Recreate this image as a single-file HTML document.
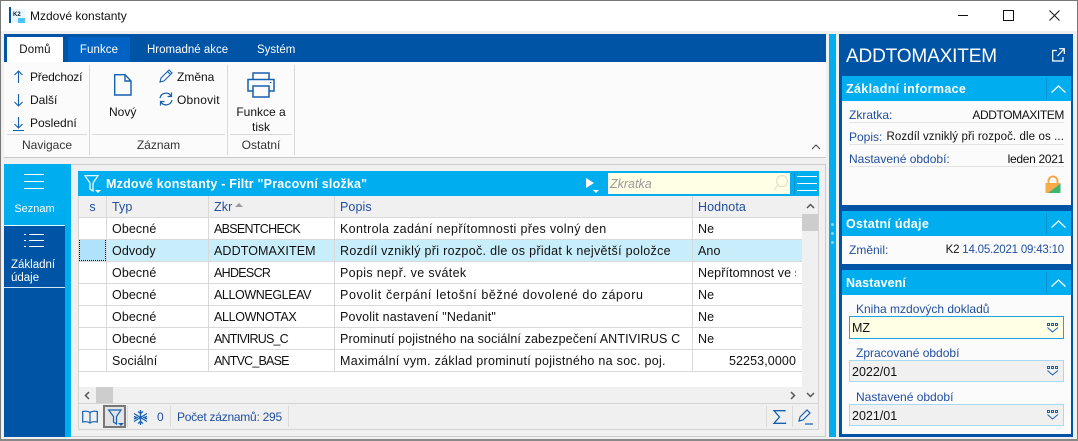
<!DOCTYPE html>
<html lang="cs"><head><meta charset="utf-8"><title>Mzdové konstanty</title>
<style>
html,body{margin:0;padding:0}
body{width:1078px;height:441px;overflow:hidden;position:relative;background:#f0f0f0;font-family:"Liberation Sans",sans-serif;font-size:12.5px;color:#111;letter-spacing:.1px}
.b{position:absolute}
.t{position:absolute;white-space:nowrap;line-height:16px}
.r{text-align:right}
.c{text-align:center}
.lb{color:#1f4e9e}
svg{position:absolute;overflow:visible}
.w{color:#fff}
.h{font-weight:bold;color:#fff;font-size:12.5px}
.n{font-size:12px;letter-spacing:0}
.hl{position:absolute;background:#d9d9d9;height:1px}
.vl{position:absolute;background:#d9d9d9;width:1px}
</style></head><body>
<!-- window frame -->
<div class="b" style="left:0;top:31px;width:1078px;height:410px;background:#f0f0f0"></div>
<div class="b" style="left:0;top:0;width:1078px;height:31px;background:#fff"></div>
<div class="b" style="left:0;top:0;width:1078px;height:1px;background:#777"></div>
<div class="b" style="left:0;top:0;width:1px;height:441px;background:#777"></div>
<div class="b" style="left:1077px;top:0;width:1px;height:441px;background:#777"></div>
<div class="b" style="left:0;top:439px;width:1078px;height:2px;background:#888"></div>
<!-- title -->
<div class="b" style="left:9px;top:7px;width:2px;height:16px;background:#0054a6"></div>
<div class="b" style="left:12px;top:9px;width:13px;height:13px;background:#e9f6fd"></div>
<div class="b" style="left:18px;top:18px;width:7px;height:5px;background:#4cc3f0"></div>
<div class="t" style="left:13px;top:10px;font:bold 6px/10px 'Liberation Sans';color:#123;letter-spacing:0">K2</div>
<div class="t n" style="left:30px;top:8px">Mzdové konstanty</div>
<div class="b" style="left:958px;top:15px;width:10px;height:1px;background:#111"></div>
<div class="b" style="left:1003px;top:10px;width:9px;height:9px;border:1px solid #111"></div>
<svg style="left:1049px;top:10px" width="11" height="11"><path d="M.5.5l10 10M10.500.5l-10 10" stroke="#111" fill="none"/></svg>
<!-- ribbon -->
<div class="b" style="left:4px;top:34px;width:822px;height:28px;background:#0054a6"></div>
<div class="b" style="left:7px;top:37px;width:56px;height:25px;background:#fff"></div>
<div class="b" style="left:68px;top:37px;width:62px;height:25px;background:#0063c4"></div>
<div class="t" style="left:7px;top:42px;width:56px;text-align:center;font-size:11.5px;letter-spacing:.2px">Domů</div>
<div class="t w" style="left:68px;top:42px;width:62px;text-align:center;font-size:11.5px;letter-spacing:.1px">Funkce</div>
<div class="t w" style="left:147px;top:42px;font-size:11.5px;letter-spacing:0">Hromadné akce</div>
<div class="t w" style="left:257px;top:42px;font-size:11.5px;letter-spacing:0">Systém</div>
<div class="b" style="left:4px;top:62px;width:822px;height:95px;background:#fbfbfb;border-bottom:1px solid #c8c8c8"></div>
<div class="vl" style="left:89px;top:65px;height:90px"></div>
<div class="vl" style="left:227px;top:65px;height:90px"></div>
<div class="vl" style="left:294px;top:65px;height:90px"></div>
<div class="hl" style="left:7px;top:134px;width:80px"></div>
<div class="hl" style="left:92px;top:134px;width:133px"></div>
<div class="hl" style="left:230px;top:134px;width:62px"></div>
<svg style="left:13px;top:70px" width="12" height="60" fill="none" stroke="#1660b0" stroke-width="1.1"><path d="M5.500 13V1M1.500 5l4-4 4 4M5.500 24v12M1.500 32l4 4 4-4M5.500 47v11M1.500 54l4 4 4-4M0 60.500h11"/></svg>
<div class="t n" style="left:30px;top:69px;letter-spacing:-.2px">Předchozí</div>
<div class="t n" style="left:30px;top:92px">Další</div>
<div class="t n" style="left:30px;top:115px">Poslední</div>
<div class="t n" style="left:7px;top:137px;width:80px;text-align:center;color:#333">Navigace</div>
<svg style="left:114px;top:74px" width="18" height="22" fill="none" stroke="#1660b0" stroke-width="1.4"><path d="M.7.700H11L17 7V21H.7ZM11 .700V7H17"/></svg>
<div class="t n" style="left:109px;top:104px">Nový</div>
<svg style="left:159px;top:69px" width="14" height="14" fill="none" stroke="#1660b0" stroke-width="1.1"><path d="M1 13l1-4 8-8 3 3-8 8ZM8.500 2.500l3 3"/></svg>
<svg style="left:159px;top:92px" width="14" height="14" fill="none" stroke="#1660b0" stroke-width="1.200"><path d="M1 6A6 6 0 0 1 12 4M13 8A6 6 0 0 1 2 10M12.500 0.500V4.500H8.500M1.500 13.500V9.500H5.500"/></svg>
<div class="t n" style="left:177px;top:69px">Změna</div>
<div class="t n" style="left:177px;top:92px;letter-spacing:.2px">Obnovit</div>
<div class="t n" style="left:92px;top:137px;width:133px;text-align:center;color:#333">Záznam</div>
<svg style="left:247px;top:72px" width="28" height="26" fill="none" stroke="#1660b0" stroke-width="1.500"><path d="M6 7V1H22V7M6 19H1V7.500H27V19H22M6 14H22V25H6Z"/><path d="M23 10.500h1.500" stroke-width="1"/></svg>
<div class="t c n" style="left:230px;top:104px;width:62px">Funkce a</div>
<div class="t c n" style="left:230px;top:119px;width:62px">tisk</div>
<div class="t n" style="left:230px;top:137px;width:62px;text-align:center;color:#333">Ostatní</div>
<svg style="left:811px;top:144px" width="10" height="6" fill="none" stroke="#444" stroke-width="1"><path d="M1 5l4-4 4 4"/></svg>
<!-- left nav -->
<div class="b" style="left:4px;top:164px;width:61px;height:273px;background:#0054a6"></div>
<div class="b" style="left:4px;top:164px;width:61px;height:61px;background:#00aeef"></div>
<div class="b" style="left:65px;top:164px;width:6px;height:273px;background:#00aeef"></div>
<div class="b" style="left:4px;top:225px;width:61px;height:1px;background:#dff"></div>
<div class="b" style="left:4px;top:287px;width:61px;height:1px;background:#cfe6f7"></div>
<svg style="left:24px;top:174px" width="20" height="16" stroke="#fff" fill="none"><path d="M0 .5h20M0 7.500h20M0 14.500h20"/></svg>
<div class="t w c" style="left:4px;top:201px;width:61px;font-size:11px;letter-spacing:0">Seznam</div>
<svg style="left:24px;top:234px" width="20" height="15" stroke="#fff" fill="none"><path d="M5 .5h15M5 6.500h15M5 12.500h15M0 .5h2M0 6.500h2M0 12.500h2"/></svg>
<div class="t w" style="left:11px;top:257px;font-size:11.500px;letter-spacing:0">Základní</div>
<div class="t w" style="left:11px;top:270px;font-size:11.500px;letter-spacing:0">údaje</div>
<!-- main -->
<div class="b" style="left:71px;top:164px;width:755px;height:273px;background:#f0f0f0;border-top:1px solid #ccc;box-sizing:border-box"></div>
<div class="b" style="left:825px;top:164px;width:1px;height:273px;background:#ccc"></div>
<div class="b" style="left:71px;top:436px;width:755px;height:1px;background:#ccc"></div>
<div class="b" style="left:78px;top:171px;width:741px;height:25px;background:#00aeef"></div>
<svg style="left:84px;top:175px" width="16" height="18" fill="none" stroke="#fff" stroke-width="1.200"><path d="M1 .7H14L9 8V16L6 14V8Z"/></svg>
<div class="b" style="left:95px;top:190px;width:0;height:0;border:3px solid transparent;border-top-color:#fff"></div>
<div class="t h" style="left:106px;top:176px;letter-spacing:.2px">Mzdové konstanty - Filtr "Pracovní složka"</div>
<div class="b" style="left:586px;top:178px;width:0;height:0;border-left:8px solid #fff;border-top:5px solid transparent;border-bottom:5px solid transparent"></div>
<div class="b" style="left:593px;top:190px;width:0;height:0;border:3px solid transparent;border-top-color:#fff"></div>
<div class="b" style="left:608px;top:173px;width:182px;height:21px;background:#ffffe6"></div>
<div class="t" style="left:610px;top:176px;font-style:italic;color:#999;letter-spacing:0">Zkratka</div>
<svg style="left:773px;top:175px" width="15" height="16" fill="none" stroke="#e3e3c8" stroke-width="1.200"><circle cx="9" cy="6" r="5.500"/><path d="M5 10L1 15"/></svg>
<div class="b" style="left:794px;top:173px;width:1px;height:21px;background:#0a8fd0"></div>
<svg style="left:797px;top:176px" width="20" height="16" stroke="#fff" fill="none"><path d="M0 .5h20M0 7.500h20M0 14.500h20"/></svg>
<!-- grid -->
<div class="b" style="left:78px;top:196px;width:741px;height:234px;background:#f0f0f0;border:1px solid #d4d4d4;border-top:0;box-sizing:border-box"></div>
<div class="b" style="left:79px;top:218px;width:723px;height:169px;background:#fff"></div>
<div class="b" style="left:79px;top:240px;width:723px;height:21px;background:#c9eefb"></div>
<div class="b" style="left:80px;top:240px;width:25px;height:20px;background:#b0e3fb;outline:1px dotted #000;outline-offset:0"></div>
<div class="hl" style="left:79px;top:217px;width:723px"></div>
<div class="hl" style="left:79px;top:239px;width:723px"></div>
<div class="hl" style="left:79px;top:261px;width:723px"></div>
<div class="hl" style="left:79px;top:283px;width:723px"></div>
<div class="hl" style="left:79px;top:305px;width:723px"></div>
<div class="hl" style="left:79px;top:327px;width:723px"></div>
<div class="hl" style="left:79px;top:349px;width:723px"></div>
<div class="hl" style="left:79px;top:371px;width:723px"></div>
<div class="vl" style="left:106px;top:196px;height:175px"></div>
<div class="vl" style="left:208px;top:196px;height:175px"></div>
<div class="vl" style="left:334px;top:196px;height:175px"></div>
<div class="vl" style="left:692px;top:196px;height:175px"></div>
<div class="t lb c" style="left:79px;top:199px;width:27px">s</div>
<div class="t lb" style="left:112px;top:199px">Typ</div>
<div class="t lb" style="left:214px;top:199px">Zkr</div>
<div class="b" style="left:235px;top:203px;width:0;height:0;border-left:4px solid transparent;border-right:4px solid transparent;border-bottom:4px solid #999"></div>
<div class="t lb" style="left:340px;top:199px">Popis</div>
<div class="t lb" style="left:698px;top:199px">Hodnota</div>
<div class="t" style="left:112px;top:221px">Obecné</div><div class="t" style="left:214px;top:221px;letter-spacing:-.7px">ABSENTCHECK</div><div class="t" style="left:340px;top:221px;letter-spacing:.34px">Kontrola zadání nepřítomnosti přes volný den</div><div class="t" style="left:698px;top:221px">Ne</div>
<div class="t" style="left:112px;top:243px">Odvody</div><div class="t" style="left:214px;top:243px">ADDTOMAXITEM</div><div class="t" style="left:340px;top:243px;letter-spacing:.31px">Rozdíl vzniklý při rozpoč. dle os přidat k největší položce</div><div class="t" style="left:698px;top:243px">Ano</div>
<div class="t" style="left:112px;top:265px">Obecné</div><div class="t" style="left:214px;top:265px;letter-spacing:-.7px">AHDESCR</div><div class="t" style="left:340px;top:265px;letter-spacing:.33px">Popis nepř. ve svátek</div><div class="t" style="left:698px;top:265px;width:98px;overflow:hidden">Nepřítomnost ve svátek</div>
<div class="t" style="left:112px;top:287px">Obecné</div><div class="t" style="left:214px;top:287px;letter-spacing:-.4px">ALLOWNEGLEAV</div><div class="t" style="left:340px;top:287px;letter-spacing:.62px">Povolit čerpání letošní běžné dovolené do záporu</div><div class="t" style="left:698px;top:287px">Ne</div>
<div class="t" style="left:112px;top:309px">Obecné</div><div class="t" style="left:214px;top:309px;letter-spacing:-.35px">ALLOWNOTAX</div><div class="t" style="left:340px;top:309px;letter-spacing:.2px">Povolit nastavení "Nedanit"</div><div class="t" style="left:698px;top:309px">Ne</div>
<div class="t" style="left:112px;top:331px">Obecné</div><div class="t" style="left:214px;top:331px;letter-spacing:-.8px">ANTIVIRUS_C</div><div class="t" style="left:340px;top:331px;letter-spacing:.12px">Prominutí pojistného na sociální zabezpečení ANTIVIRUS C</div><div class="t" style="left:698px;top:331px">Ne</div>
<div class="t" style="left:112px;top:353px">Sociální</div><div class="t" style="left:214px;top:353px;letter-spacing:-.8px">ANTVC_BASE</div><div class="t" style="left:340px;top:353px;letter-spacing:.29px">Maximální vym. základ prominutí pojistného na soc. poj.</div><div class="t r" style="left:698px;top:353px;width:98px">52253,0000</div>
<!-- scrollbars -->
<div class="b" style="left:802px;top:197px;width:16px;height:190px;background:#f0f0f0"></div>
<div class="b" style="left:802px;top:214px;width:16px;height:17px;background:#cdcdcd"></div>
<svg style="left:806px;top:203px" width="9" height="6" fill="none" stroke="#555" stroke-width="1.500"><path d="M1 5l3.500-3.500L8 5"/></svg>
<svg style="left:806px;top:392px" width="9" height="6" fill="none" stroke="#555" stroke-width="1.500"><path d="M1 1l3.500 3.500L8 1"/></svg>
<div class="b" style="left:79px;top:387px;width:723px;height:16px;background:#f0f0f0"></div>
<div class="b" style="left:96px;top:387px;width:17px;height:16px;background:#cdcdcd"></div>
<svg style="left:84px;top:391px" width="6" height="9" fill="none" stroke="#555" stroke-width="1.500"><path d="M5 1L1.500 4.500 5 8"/></svg>
<svg style="left:790px;top:391px" width="6" height="9" fill="none" stroke="#555" stroke-width="1.500"><path d="M1 1l3.500 3.500L1 8"/></svg>
<!-- status -->
<div class="b" style="left:79px;top:403px;width:739px;height:1px;background:#d4d4d4"></div>
<svg style="left:82px;top:410px" width="16" height="14" fill="none" stroke="#1660b0" stroke-width="1.200"><path d="M8 2.500C6 1 3 1 .7 1.500V12C3 11.500 6 11.500 8 13 10 11.500 13 11.500 15.300 12V1.500C13 1 10 1 8 2.500V13"/></svg>
<div class="b" style="left:103px;top:405px;width:23px;height:23px;border:2px solid #777;box-sizing:border-box;background:#e4e4e4"></div>
<svg style="left:108px;top:409px" width="14" height="16" fill="none" stroke="#1660b0" stroke-width="1.200"><path d="M.7 1H13L8.500 7.500V15L5.500 13V7.500Z"/></svg>
<div class="b" style="left:118px;top:423px;width:0;height:0;border:3px solid transparent;border-top-color:#1660b0"></div>
<div class="vl" style="left:127px;top:406px;height:21px"></div>
<svg style="left:133px;top:410px" width="15" height="15" fill="none" stroke="#1660b0" stroke-width="1.300"><path d="M7.500 0v15M1 3.500l13 8M14 3.500l-13 8M5 1.500l2.500 2 2.500-2M5 13.500l2.500-2 2.500 2M1 6.500l3 1-3 1.500M14 6.500l-3 1 3 1.500"/></svg>
<div class="t lb n" style="left:157px;top:409px">0</div>
<div class="vl" style="left:170px;top:406px;height:21px"></div>
<div class="t lb n" style="left:177px;top:409px;letter-spacing:-.25px">Počet záznamů: 295</div>
<div class="vl" style="left:288px;top:406px;height:21px"></div>
<div class="vl" style="left:766px;top:406px;height:21px"></div>
<div class="vl" style="left:792px;top:406px;height:21px"></div>
<svg style="left:773px;top:410px" width="13" height="14" fill="none" stroke="#1660b0" stroke-width="1.300"><path d="M12 1.500V.7H1L6.500 7 1 13.300H12.500V12.500"/></svg>
<svg style="left:798px;top:409px" width="16" height="16" fill="none" stroke="#1660b0" stroke-width="1.200"><path d="M1 12l1-4 7-7 3 3-7 7ZM7 15h8"/></svg>
<!-- splitter + right panel -->
<div class="b" style="left:829px;top:34px;width:7px;height:403px;background:#00aeef"></div>
<div class="b" style="left:831px;top:223px;width:3px;height:3px;border-radius:2px;background:#7fd6f7"></div>
<div class="b" style="left:831px;top:232px;width:3px;height:3px;border-radius:2px;background:#7fd6f7"></div>
<div class="b" style="left:831px;top:241px;width:3px;height:3px;border-radius:2px;background:#7fd6f7"></div>
<div class="b" style="left:839px;top:34px;width:234px;height:403px;background:#0054a6"></div>
<div class="t w" style="left:846px;top:45px;font-size:19px;line-height:24px;letter-spacing:-.15px">ADDTOMAXITEM</div>
<svg style="left:1052px;top:48px" width="13" height="14" fill="none" stroke="#fff" stroke-width="1.200"><path d="M5 2.500H.7V13H11V9M7 .7H12.300V6M12 1L5.500 8"/></svg>
<!-- card 1 -->
<div class="b" style="left:842px;top:76px;width:229px;height:129px;background:#fbfbfb"></div>
<div class="b" style="left:842px;top:76px;width:229px;height:25px;background:#00aeef"></div>
<div class="t h" style="left:846px;top:81px;letter-spacing:.35px">Základní informace</div>
<div class="b" style="left:1046px;top:78px;width:1px;height:21px;background:#0a8fd0"></div>
<svg style="left:1051px;top:85px" width="15" height="8" fill="none" stroke="#fff" stroke-width="1.200"><path d="M.5 7.500L7.500 1l7 6.500"/></svg>
<div class="t lb n" style="left:849px;top:107px">Zkratka:</div>
<div class="t r n" style="left:950px;top:107px;width:114px;letter-spacing:-.4px">ADDTOMAXITEM</div>
<div class="hl" style="left:849px;top:122px;width:215px;background:#e4e4e4"></div>
<div class="t lb n" style="left:849px;top:129px">Popis:</div>
<div class="t r" style="left:884px;top:129px;width:180px;font-size:11.5px;letter-spacing:.1px">Rozdíl vzniklý při rozpoč. dle os ...</div>
<div class="hl" style="left:849px;top:144px;width:215px;background:#e4e4e4"></div>
<div class="t lb n" style="left:849px;top:151px">Nastavené období:</div>
<div class="t r n" style="left:990px;top:151px;width:74px;letter-spacing:-.3px">leden 2021</div>
<div class="hl" style="left:849px;top:166px;width:215px;background:#e4e4e4"></div>
<svg style="left:1045px;top:176px" width="16" height="18"><path d="M3.500 7V5a4.500 4.500 0 0 1 9 0V7" fill="none" stroke="#f7a84a" stroke-width="2"/><path d="M.5 7H15.500V17H.5Z" fill="#f9ab4c"/><path d="M15.500 7.500V17H3Z" fill="#3fb56f"/></svg>
<!-- card 2 -->
<div class="b" style="left:842px;top:211px;width:229px;height:53px;background:#fbfbfb"></div>
<div class="b" style="left:842px;top:211px;width:229px;height:25px;background:#00aeef"></div>
<div class="t h" style="left:846px;top:216px;letter-spacing:.3px">Ostatní údaje</div>
<div class="b" style="left:1046px;top:213px;width:1px;height:21px;background:#0a8fd0"></div>
<svg style="left:1051px;top:220px" width="15" height="8" fill="none" stroke="#fff" stroke-width="1.200"><path d="M.5 7.500L7.500 1l7 6.500"/></svg>
<div class="t lb n" style="left:849px;top:242px">Změnil:</div>
<div class="t r" style="left:930px;top:242px;width:134px;font-size:11.5px;letter-spacing:-.2px"><span>K2</span> <span class="lb">14.05.2021 09:43:10</span></div>
<!-- card 3 -->
<div class="b" style="left:842px;top:270px;width:229px;height:164px;background:#fbfbfb"></div>
<div class="b" style="left:842px;top:270px;width:229px;height:25px;background:#00aeef"></div>
<div class="t h" style="left:846px;top:275px;letter-spacing:.1px">Nastavení</div>
<div class="b" style="left:1046px;top:272px;width:1px;height:21px;background:#0a8fd0"></div>
<svg style="left:1051px;top:279px" width="15" height="8" fill="none" stroke="#fff" stroke-width="1.200"><path d="M.5 7.500L7.500 1l7 6.500"/></svg>
<div class="t lb n" style="left:856px;top:301px">Kniha mzdových dokladů</div>
<div class="b" style="left:849px;top:316px;width:215px;height:23px;box-sizing:border-box;background:#ffffe6;border:1px solid #1ba4e4"></div>
<div class="t" style="left:852px;top:320px;letter-spacing:0">MZ</div>
<div class="t lb n" style="left:856px;top:345px">Zpracované období</div>
<div class="b" style="left:849px;top:360px;width:215px;height:22px;box-sizing:border-box;background:#f0f0f0;border:1px solid #a5daf5"></div>
<div class="t" style="left:852px;top:364px;letter-spacing:0">2022/01</div>
<div class="t lb n" style="left:856px;top:389px">Nastavené období</div>
<div class="b" style="left:849px;top:404px;width:215px;height:22px;box-sizing:border-box;background:#f0f0f0;border:1px solid #a5daf5"></div>
<div class="t" style="left:852px;top:408px;letter-spacing:0">2021/01</div>
<svg style="left:1047px;top:323px" width="12" height="10" fill="none" stroke="#1660b0"><path d="M.5.500h2v2h-2zM4.500.500h2v2h-2zM8.500.500h2v2h-2zM.5 4.500l5 4.500 5.500-4.500"/></svg>
<svg style="left:1047px;top:366px" width="12" height="10" fill="none" stroke="#1660b0"><path d="M.5.500h2v2h-2zM4.500.500h2v2h-2zM8.500.500h2v2h-2zM.5 4.500l5 4.500 5.500-4.500"/></svg>
<svg style="left:1047px;top:410px" width="12" height="10" fill="none" stroke="#1660b0"><path d="M.5.500h2v2h-2zM4.500.500h2v2h-2zM8.500.500h2v2h-2zM.5 4.500l5 4.500 5.500-4.500"/></svg>
</body></html>
